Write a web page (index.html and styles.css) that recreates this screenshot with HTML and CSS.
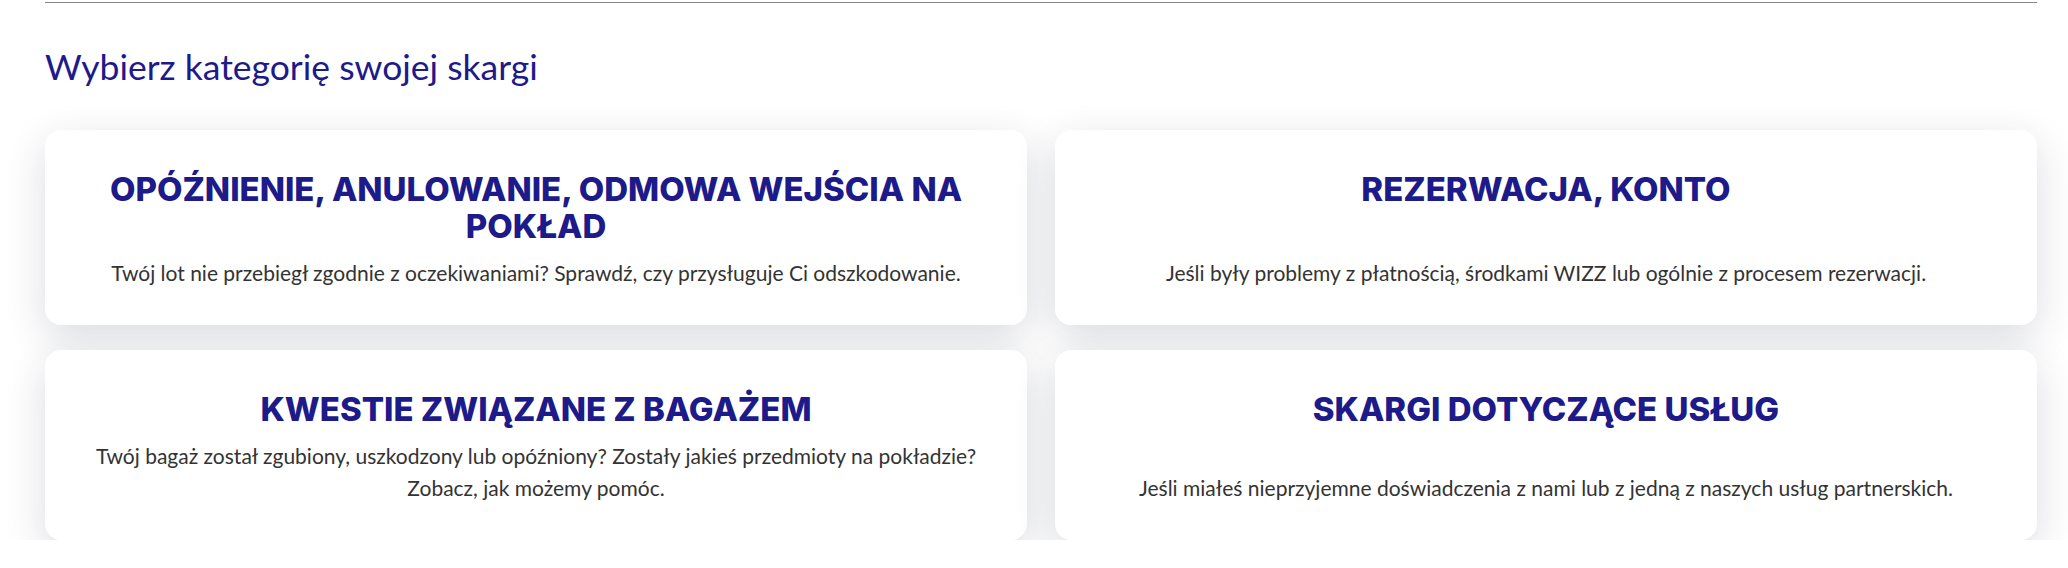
FILE: index.html
```html
<!DOCTYPE html>
<html lang="pl">
<head>
    <meta charset="UTF-8">
    <meta name="viewport" content="width=device-width, initial-scale=1.0">
    <title>Wybierz kategorię swojej skargi</title>
    <link rel="stylesheet" href="styles.css">
</head>
<body>

<div class="page">
    <div class="divider"></div>

    <h2 class="section-title">Wybierz kategorię swojej skargi</h2>

    <div class="categories">
        <a href="#" class="category-card">
            <h3>Opóźnienie, anulowanie, odmowa wejścia na pokład</h3>
            <p>Twój lot nie przebiegł zgodnie z oczekiwaniami? Sprawdź, czy przysługuje Ci odszkodowanie.</p>
        </a>
        <a href="#" class="category-card">
            <h3>Rezerwacja, konto</h3>
            <p>Jeśli były problemy z płatnością, środkami WIZZ lub ogólnie z procesem rezerwacji.</p>
        </a>
        <a href="#" class="category-card">
            <h3>Kwestie związane z bagażem</h3>
            <p>Twój bagaż został zgubiony, uszkodzony lub opóźniony? Zostały jakieś przedmioty na pokładzie? Zobacz, jak możemy pomóc.</p>
        </a>
        <a href="#" class="category-card">
            <h3>Skargi dotyczące usług</h3>
            <p>Jeśli miałeś nieprzyjemne doświadczenia z nami lub z jedną z naszych usług partnerskich.</p>
        </a>
    </div>
</div>

</body>
</html>
```

FILE: styles.css
```css
/* strona */
body {
    margin: 0;
    background-color: #ffffff;
    font-family: Lato, "Noto Sans", sans-serif;
}

.page {
    padding: 2px 31px 0 45px;
}

/* linia u góry */
.divider {
    height: 1px;
    background-color: #858585;
}

.section-title {
    margin: 42px 0 41px;
    font-size: 35.5px;
    line-height: 44px;
    font-weight: 400;
    color: #1d1a8a;
}

/* siatka kategorii */
.categories {
    display: grid;
    grid-template-columns: 1fr 1fr;
    gap: 25px 28px;
}

.category-card {
    display: flex;
    flex-direction: column;
    justify-content: space-between;
    padding: 41px 40px 36px;
    background-color: #ffffff;
    border-radius: 16px;
    box-shadow: 0 12px 40px rgba(30, 40, 70, 0.16);
    text-align: center;
    text-decoration: none;
}

.category-card h3 {
    margin: 0 0 12px;
    font-family: Inter, "Noto Sans", sans-serif;
    font-size: 33px;
    line-height: 37px;
    font-weight: 800;
    text-transform: uppercase;
    color: #1d1a8a;
}

.category-card p {
    margin: 0;
    font-size: 21px;
    line-height: 32px;
    color: #333333;
}
```
